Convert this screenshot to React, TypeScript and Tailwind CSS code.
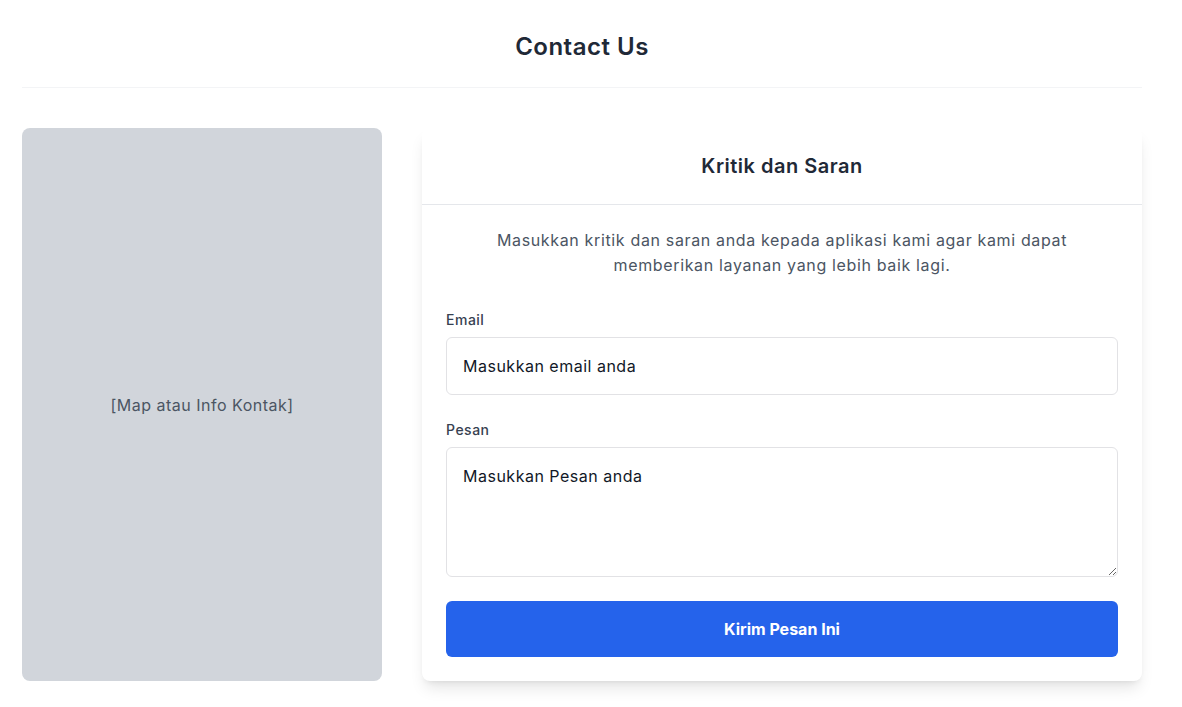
export default function App() {
  return (
    <div className="min-h-screen bg-white tracking-[0.5px]" style={{ fontFamily: "Inter, 'Open Sans', sans-serif" }}>
      <div className="ml-[22px] w-[1120px]">
        <div className="border-b border-[#f3f4f6] pb-6 pt-[31px] text-center">
          <h1 className="text-2xl font-semibold text-[#1f2937]">Contact Us</h1>
        </div>
        <div className="mt-10 grid grid-cols-[1fr_2fr] gap-10">
          <div className="flex items-center justify-center rounded-lg bg-[#d1d5db] text-[#4b5563]">
            [Map atau Info Kontak]
          </div>
          <div className="rounded-lg bg-white shadow-[0_10px_15px_-3px_rgba(0,0,0,0.1),0_4px_6px_-4px_rgba(0,0,0,0.1)]">
            <div className="flex h-[77px] items-center justify-center border-b border-[#e5e7eb]">
              <h2 className="text-xl font-semibold text-[#1f2937]">Kritik dan Saran</h2>
            </div>
            <div className="px-6 pb-6 pt-[23px]">
              <p className="mx-auto max-w-[630px] text-center text-base leading-[25px] tracking-[0.65px] text-[#4b5563]">
                Masukkan kritik dan saran anda kepada aplikasi kami agar kami dapat memberikan layanan yang lebih baik lagi.
              </p>
              <form className="mt-8" onSubmit={(e) => e.preventDefault()}>
                <label className="mb-[7px] block text-sm font-medium text-[#374151]">Email</label>
                <input
                  type="email"
                  placeholder="Masukkan email anda"
                  className="block w-full rounded-md border border-[#e2e2e5] px-4 py-4 text-base leading-6 text-[#111827] placeholder:text-[#111827] focus:outline-none"
                />
                <label className="mb-[7px] mt-[25px] block text-sm font-medium text-[#374151]">Pesan</label>
                <textarea
                  rows={4}
                  placeholder="Masukkan Pesan anda"
                  className="block w-full rounded-md border border-[#e2e2e5] px-4 py-4 text-base leading-6 text-[#111827] placeholder:text-[#111827] focus:outline-none"
                />
                <button
                  type="submit"
                  className="mt-6 block h-14 w-full rounded-md bg-[#2563eb] text-base font-bold tracking-normal text-white"
                >
                  Kirim Pesan Ini
                </button>
              </form>
            </div>
          </div>
        </div>
      </div>
    </div>
  );
}
